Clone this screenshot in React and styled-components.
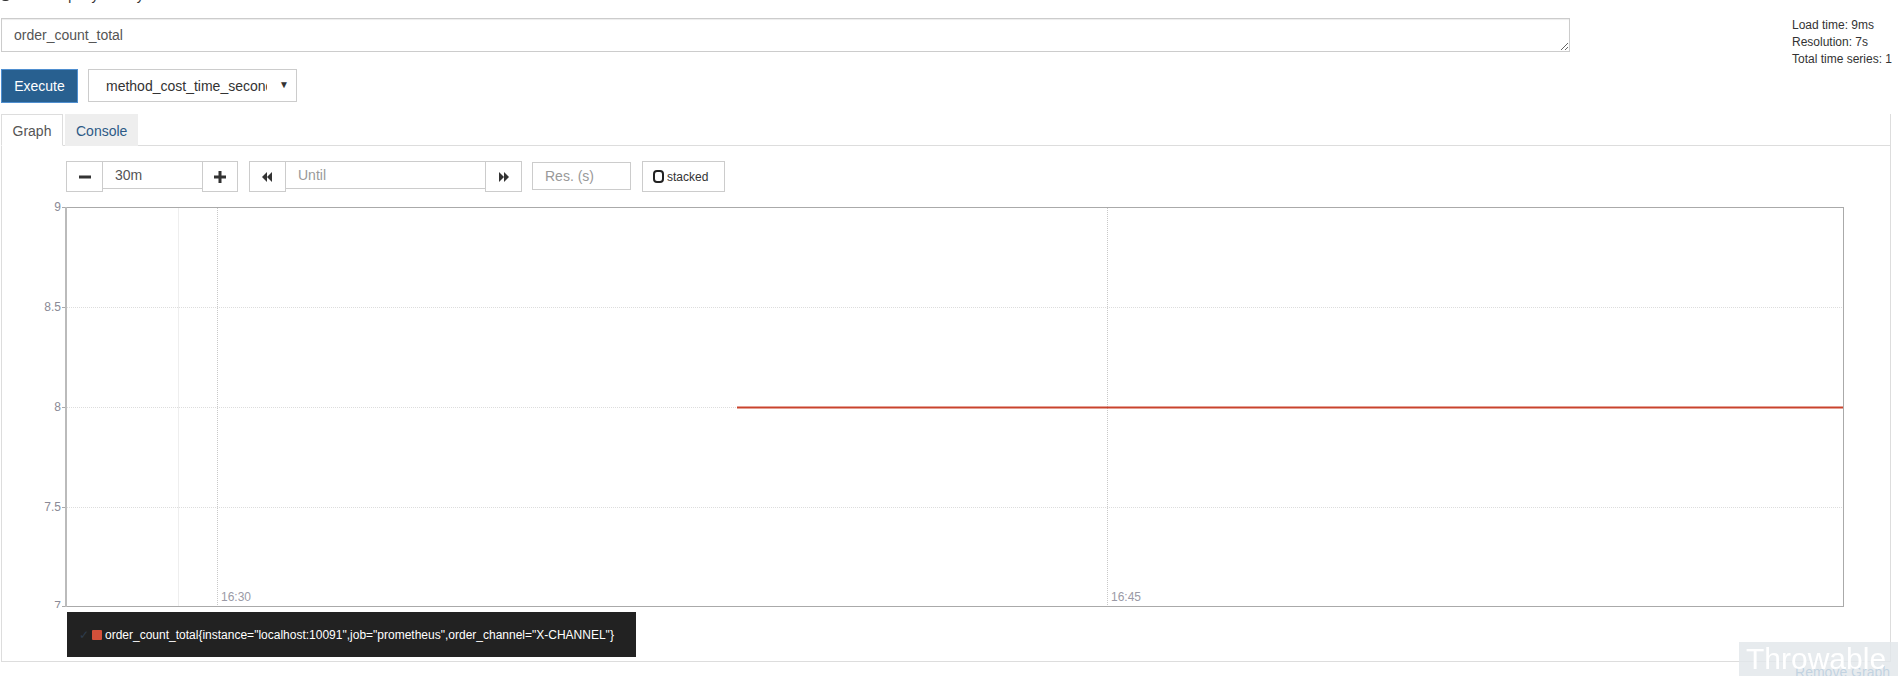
import React from "react";
import styled, { createGlobalStyle } from "styled-components";

const GlobalStyle = createGlobalStyle`
  body {
    margin: 0;
    background: #fff;
    font-family: "Liberation Sans", Arial, sans-serif;
    font-size: 14px;
    color: #333;
    overflow: hidden;
  }
  * { box-sizing: border-box; }
`;

const Page = styled.div`
  padding: 0 7px 0 1px;
  width: 1898px;
`;

const HistoryRow = styled.div`
  height: 20px;
  margin-top: -15px;
  display: flex;
  align-items: center;
  gap: 6px;
  line-height: 20px;
  font-size: 14px;

  .box {
    width: 9px;
    height: 12px;
    border-radius: 4px;
    background: #333;
  }
`;

const QueryRow = styled.div`
  display: flex;
  align-items: flex-start;
  height: 34px;
  margin-top: 13px;
`;

const QueryInput = styled.textarea`
  width: 1569px;
  height: 34px;
  padding: 6px 12px;
  border: 1px solid #ccc;
  box-shadow: inset 0 1px 1px rgba(0, 0, 0, 0.075);
  font-family: "Liberation Sans", Arial, sans-serif;
  font-size: 14px;
  line-height: 20px;
  color: #555;
  outline: none;
  display: block;
`;

const Stats = styled.div`
  margin-left: auto;
  width: 99px;
  margin-top: -1px;
  font-size: 12px;
  line-height: 17px;
  color: #333;
  white-space: nowrap;
`;

const ActionRow = styled.div`
  display: flex;
  align-items: flex-start;
  gap: 10px;
  margin-top: 17px;
`;

const ExecuteButton = styled.button`
  width: 77px;
  height: 34px;
  background: #286090;
  border: 1px solid #4f8fd0;
  color: #fff;
  font-family: "Liberation Sans", Arial, sans-serif;
  font-size: 14px;
  padding: 0;
`;

const MetricSelect = styled.div`
  width: 209px;
  height: 33px;
  border: 1px solid #ccc;
  background: #fff;
  position: relative;
  display: flex;
  align-items: center;
  padding: 0 29px 0 17px;
  font-size: 14px;
  color: #333;

  .value {
    overflow: hidden;
    white-space: nowrap;
  }
  .arrow {
    position: absolute;
    right: 7px;
    top: 9px;
    font-size: 10px;
    color: #333;
  }
`;

const Panel = styled.div`
  margin-top: 11px;
  border: 1px solid #ddd;
  border-top: none;
`;

const TabBar = styled.div`
  display: flex;
  border-bottom: 1px solid #ddd;
  margin-left: -1px;
  height: 32px;
`;

const Tab = styled.div`
  height: 32px;
  padding: 6px 10px;
  line-height: 20px;
  font-size: 14px;
  margin-right: 2px;
  border: 1px solid ${(p) => (p.$active ? "#ddd" : "#eee")};
  border-bottom-color: ${(p) => (p.$active ? "#fff" : "#eee")};
  background: ${(p) => (p.$active ? "#fff" : "#eee")};
  color: ${(p) => (p.$active ? "#555" : "#2d5a86")};
  width: ${(p) => p.$w}px;
  text-align: center;
`;

const PanelBody = styled.div`
  padding: 15px 0 4px 0;
`;

const Controls = styled.div`
  display: flex;
  align-items: flex-start;
  margin-left: 64px;
`;

const Group = styled.div`
  display: flex;
  align-items: flex-start;
  margin-right: ${(p) => p.$gap || 0}px;
`;

const IconButton = styled.div`
  width: ${(p) => p.$w || 37}px;
  height: 31px;
  border: 1px solid #ccc;
  background: #fff;
  display: flex;
  align-items: center;
  justify-content: center;
  margin-left: -1px;
  &:first-child { margin-left: 0; }
`;

const Field = styled.div`
  width: ${(p) => p.$w}px;
  height: 28px;
  border: 1px solid #ccc;
  border-left: none;
  border-right: none;
  margin-top: ${(p) => (p.$solo ? 1 : 0)}px;
  ${(p) => p.$solo && "border-left: 1px solid #ccc; border-right: 1px solid #ccc;"}
  padding: 0 12px;
  display: flex;
  align-items: center;
  font-size: 14px;
  color: ${(p) => (p.$placeholder ? "#999" : "#555")};
`;

const StackedButton = styled.div`
  width: 83px;
  height: 31px;
  border: 1px solid #ccc;
  display: flex;
  align-items: center;
  gap: 3px;
  padding-left: 10px;
  font-size: 12px;
  color: #333;
`;

const ChartWrap = styled.div`
  margin: 8px 0 0 38px;
  height: 408px;

  svg {
    display: block;
    font-family: "Liberation Sans", Arial, sans-serif;
  }
`;

const Legend = styled.div`
  display: inline-flex;
  align-items: center;
  margin: 4px 0 0 65px;
  height: 45px;
  padding: 0 22px 0 12px;
  background: #222;
  color: #fff;
  font-size: 12px;

  .check {
    color: #2e3c4c;
    margin-right: 3px;
    font-size: 12px;
  }
  .swatch {
    width: 10px;
    height: 10px;
    background: #d4503a;
    margin-right: 3px;
    border-radius: 1px;
  }
`;

const RemoveRow = styled.div`
  display: flex;
  justify-content: flex-end;
  padding-right: 1px;
  line-height: 20px;
  font-size: 14px;
  color: #337ab7;
`;

const Watermark = styled.div`
  position: fixed;
  right: 0;
  bottom: 0;
  width: 159px;
  height: 34px;
  padding-left: 7px;
  background: rgba(226, 230, 234, 0.82);
  color: #fff;
  font-family: "Liberation Sans", Arial, sans-serif;
  font-size: 30px;
  line-height: 34px;
  overflow: hidden;
  white-space: nowrap;
`;

const Minus = () => (
  <svg width="12" height="12" viewBox="0 0 12 12">
    <rect x="0" y="4.5" width="12" height="3" fill="#333" />
  </svg>
);

const Plus = () => (
  <svg width="12" height="12" viewBox="0 0 12 12">
    <rect x="0" y="4.5" width="12" height="3" fill="#333" />
    <rect x="4.5" y="0" width="3" height="12" fill="#333" />
  </svg>
);

const Rewind = () => (
  <svg width="11" height="10" viewBox="0 0 11 10">
    <polygon points="0,5 5,0 5,10" fill="#333" />
    <polygon points="5,5 10,0 10,10" fill="#333" />
  </svg>
);

const Forward = () => (
  <svg width="11" height="10" viewBox="0 0 11 10">
    <polygon points="1,0 6,5 1,10" fill="#333" />
    <polygon points="6,0 11,5 6,10" fill="#333" />
  </svg>
);

const StackIcon = () => (
  <svg width="11" height="13" viewBox="0 0 11 13">
    <rect x="1" y="1" width="9" height="11" rx="3" fill="none" stroke="#222" strokeWidth="2" />
  </svg>
);

const yTicks = [
  { label: "9", y: 7 },
  { label: "8.5", y: 107 },
  { label: "8", y: 207 },
  { label: "7.5", y: 307 },
  { label: "7", y: 406 },
];

const xTicks = [
  { label: "16:30", x: 177 },
  { label: "16:45", x: 1067 },
];

const Chart = () => (
  <svg width="1806" height="408" viewBox="0 0 1806 408">
    <line x1="138.5" y1="7" x2="138.5" y2="406" stroke="#eee" />
    {yTicks.slice(1, 4).map((t) => (
      <line
        key={t.label}
        x1="27"
        x2="1804"
        y1={t.y + 0.5}
        y2={t.y + 0.5}
        stroke="#ddd"
        strokeDasharray="1 1"
      />
    ))}
    {xTicks.map((t) => (
      <g key={t.label}>
        <line
          x1={t.x + 0.5}
          x2={t.x + 0.5}
          y1="8"
          y2="406"
          stroke="#c8c8c8"
          strokeDasharray="1 1"
        />
        <text x={t.x + 4} y="401" fontSize="12" fill="#9a9aa6">
          {t.label}
        </text>
      </g>
    ))}
    <line x1="27" y1="7.5" x2="1804" y2="7.5" stroke="#aaa" />
    <line x1="1803.5" y1="7" x2="1803.5" y2="406" stroke="#aaa" />
    <line x1="25" y1="406.5" x2="1804" y2="406.5" stroke="#aaa" />
    <rect x="25" y="7" width="2" height="400" fill="#bbb" />
    {yTicks.map((t) => (
      <g key={t.label}>
        <line x1="22" x2="25" y1={t.y + 0.5} y2={t.y + 0.5} stroke="#aaa" />
        <text x="21" y={t.y + 4} fontSize="12" fill="#8a8a96" textAnchor="end">
          {t.label}
        </text>
      </g>
    ))}
    <line x1="697" y1="207.5" x2="1803" y2="207.5" stroke="#c9432c" strokeWidth="2" />
  </svg>
);

export default function App() {
  return (
    <Page>
      <GlobalStyle />
      <HistoryRow>
        <span className="box" />
        <span>Enable query history</span>
      </HistoryRow>
      <QueryRow>
        <QueryInput defaultValue="order_count_total" spellCheck={false} />
        <Stats>
          <div>Load time: 9ms</div>
          <div>Resolution: 7s</div>
          <div>Total time series: 1</div>
        </Stats>
      </QueryRow>
      <ActionRow>
        <ExecuteButton>Execute</ExecuteButton>
        <MetricSelect>
          <span className="value">method_cost_time_seconds</span>
          <span className="arrow">▼</span>
        </MetricSelect>
      </ActionRow>
      <Panel>
        <TabBar>
          <Tab $active $w={62}>Graph</Tab>
          <Tab $w={73}>Console</Tab>
        </TabBar>
        <PanelBody>
          <Controls>
            <Group $gap={11}>
              <IconButton>
                <Minus />
              </IconButton>
              <Field $w={100}>30m</Field>
              <IconButton $w={36}>
                <Plus />
              </IconButton>
            </Group>
            <Group $gap={10}>
              <IconButton>
                <Rewind />
              </IconButton>
              <Field $w={200} $placeholder>
                Until
              </Field>
              <IconButton>
                <Forward />
              </IconButton>
            </Group>
            <Group $gap={11}>
              <Field $w={99} $placeholder $solo>
                Res. (s)
              </Field>
            </Group>
            <StackedButton>
              <StackIcon />
              stacked
            </StackedButton>
          </Controls>
          <ChartWrap>
            <Chart />
          </ChartWrap>
          <Legend>
            <span className="check">✓</span>
            <span className="swatch" />
            <span>
              order_count_total{"{"}instance="localhost:10091",job="prometheus",order_channel="X-CHANNEL"{"}"}
            </span>
          </Legend>
        </PanelBody>
      </Panel>
      <RemoveRow>Remove Graph</RemoveRow>
      <Watermark>Throwable</Watermark>
    </Page>
  );
}
